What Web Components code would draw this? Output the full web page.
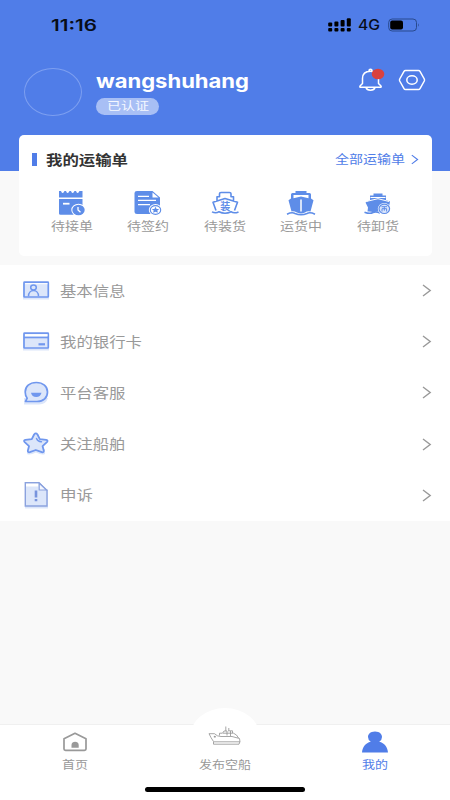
<!DOCTYPE html>
<html lang="zh-CN">
<head>
<meta charset="utf-8">
<title>我的</title>
<style>
html,body{margin:0;padding:0}
body{width:450px;height:800px;overflow:hidden;background:#f9f9f9;font-family:"Inter","Noto Sans CJK SC",sans-serif}
</style>
</head>
<body>
<mine-page></mine-page>
<script>
const define = (name, html, setup) => customElements.define(name, class extends HTMLElement {
  connectedCallback() {
    if (this.shadowRoot) return;
    const t = document.createElement('template');
    t.innerHTML = typeof html === 'function' ? html(this) : html;
    this.attachShadow({mode: 'open'}).append(t.content.cloneNode(true));
    if (setup) setup(this);
  }
});

/* Text stretched horizontally to a given width */
define('wide-text', `<style>
:host{display:block;white-space:nowrap;flex:none}
span{display:inline-block;transform-origin:0 50%}
</style><span><slot></slot></span>`, el => {
  const s = el.shadowRoot.querySelector('span');
  const w = +el.getAttribute('w');
  const natural = s.getBoundingClientRect().width;
  el.style.width = w + 'px';
  s.style.transform = `scaleX(${w / natural})`;
});

const B = '#5e8de8', L = '#dce6fa', K = '#7097ee';
const icons = {
  bell: [28, 26, `<g fill="none" stroke="#fff" stroke-width="1.500" stroke-linecap="round" stroke-linejoin="round"><path d="M12 3.500V2.800Q12 1.200 13.500 1.200T15 2.800V3.500M13.500 3.200C8 3.200 5.500 6.500 5.500 10.500V15.500L3 18Q2.300 19.300 4 19.300H23Q24.700 19.300 24 18L21.500 15.500V10.500C21.500 6.500 19 3.200 13.500 3.200M9 19.500C10 23 17 23 18 19.500"/></g><ellipse cx="21" cy="6" rx="6.300" ry="5.300" fill="#d9413f"/>`],
  gear: [28, 22, `<g fill="none" stroke="#fff" stroke-width="1.500" stroke-linejoin="round"><path d="M7.500 1.500H20.500Q21.500 1.500 22 2.400L26.300 10Q26.700 11 26.300 12L22 19.600Q21.500 20.500 20.500 20.500H7.500Q6.500 20.500 6 19.600L1.700 12Q1.300 11 1.700 10L6 2.400Q6.500 1.500 7.500 1.500Z"/><ellipse cx="14" cy="11" rx="5.200" ry="4.200"/></g>`],
  signal: [24, 14, [0,1,2,3].map(i => `<rect x="${0.200 + i * 6.200}" y="${[4.500,3.500,2,0.300][i]}" width="4" height="${[4,5,6.500,8.200][i]}" rx="1"/><rect x="${0.200 + i * 6.200}" y="10" width="4" height="3.500" rx="1"/>`).join('')],
  battery: [32, 14, `<rect x=".7" y="1" width="27.800" height="12" rx="3.500" fill="none" stroke="#294a8e" stroke-width="1"/><rect x="2.200" y="2.500" width="12.800" height="9" rx="2"/><path d="M30 5.300Q31.700 7 30 8.800Z" fill="#294a8e"/>`],
  order: [28, 26, `<path fill="${B}" d="M1 1H3Q4 4 5.500 2.500L6.500 1H8Q9 4 10.500 2.500L11.500 1H13Q14 4 15.500 2.500L16.500 1H18Q19 4 20.500 2.500L21.500 1H24.500V7.600H1ZM1 9H24.500V24.800H2.500Q1 24.800 1 23.500Z"/><path d="M5 13.700H11.500" stroke="#fff" stroke-width="1.800"/><ellipse cx="20.500" cy="20" rx="7.200" ry="6.200" fill="#fff"/><ellipse cx="20.500" cy="20" rx="6.200" ry="5.200" fill="${B}"/><path d="M20 17V20L22.500 22.300" fill="none" stroke="#fff" stroke-width="1.300"/>`],
  sign: [28, 26, `<path fill="${B}" d="M3 1H18.500L26 7.500V24H3Q.5 24 .5 22V3Q.5 1 3 1Z"/><path d="M18.500 2.500V7.500H24.500Z" fill="#fff"/><path d="M4 6.300H15M4 10.400H22M4 14.600H16" stroke="#fff" stroke-width="1.300"/><ellipse cx="21.500" cy="20" rx="6.700" ry="6" fill="#fff"/><ellipse cx="21.500" cy="20" rx="5.200" ry="4.400" fill="#fff" stroke="${B}" stroke-width="1.100"/><path fill="${B}" d="M21.500 16.800L22.600 18.900 25.300 19.100 23.300 20.600 23.900 22.800 21.500 21.700 19.100 22.800 19.700 20.600 17.700 19.100 20.400 18.900Z"/>`],
  load: [28, 26, `<g fill="none" stroke="${B}" stroke-width="1.600" stroke-linejoin="round"><path d="M6 11V6.700H8.500V3.800Q8.500 2.500 10 2.500H18.500Q20 2.500 20 3.800V6.700H22.500V11M5 20.500L2 12.300 14 8.600 26.500 12.300 23.500 20.500M1 21.900Q5 23.800 8 21.700Q14 24.700 20 21.700Q23 23.800 27.500 21.900"/></g><text x="14.200" y="19.500" text-anchor="middle" font-family="Noto Sans CJK SC" font-size="10" font-weight="700" fill="${B}">装</text>`],
  ship: [30, 26, `<path fill="${B}" d="M9.500 1H20.500V3H23.500Q25 3 25 4.500V8.500L27.500 10.200 24.500 21.500Q21 21 19 22.400Q15 24.500 11 22.400Q8 21 5.500 21.500L2.500 10.200 5 8.500V4.500Q5 3 6.500 3H9.500Z"/><path fill="#fff" d="M7.500 5H22.500V8.300L15 6.500 7.500 8.300Z"/><path d="M15 9.500V21.500" stroke="#fff" stroke-width="1.500"/><path d="M1 24.200Q6 21.800 9 23.500Q15 26 21 23.500Q24 21.800 29 24.200" fill="none" stroke="${B}" stroke-width="1.600"/>`],
  unload: [28, 26, `<path fill="${B}" d="M9.500 3.500H18.500V5.500H22V10L26 11.500 24.500 20Q23 23 19 22.400Q14 20.500 10 22.500Q6 21 3.500 21.500L4 17.500 1.500 12.500 6 10V5.500H9.500Z"/><path d="M6.500 7.500H21.500M3 11.300L14 8.700 25 11.500" fill="none" stroke="#fff" stroke-width="1"/><path d="M.5 22.200Q6 24.300 9 22.500Q12 21.500 16 23" fill="none" stroke="${B}" stroke-width="1.500"/><ellipse cx="20.300" cy="18.800" rx="6.500" ry="5.800" fill="#fff"/><ellipse cx="20.300" cy="18.800" rx="5.300" ry="4.700" fill="#dbe6fb" stroke="${B}" stroke-width="1.200"/><path d="M17.500 16.700H23M18 18.700H22.600V21.500M18 18.700V21.500M20.300 16.700V20.700" fill="none" stroke="${B}" stroke-width="1"/>`],
  idcard: [28, 22, `<rect x="1" y="4" width="26" height="15.500" fill="${L}"/><rect x="2" y="2.200" width="24.300" height="14.800" rx=".5" fill="${L}" stroke="${K}" stroke-width="1.700"/><path d="M3 3.700H25.500" stroke="#fff" stroke-width="1"/><g fill="none" stroke="${K}" stroke-width="1.500"><ellipse cx="11.500" cy="7.500" rx="2.800" ry="2.400"/><path d="M6.500 16.200C6.500 8.700 16.500 8.700 16.500 16.200"/></g>`],
  bank: [28, 22, `<rect x="1" y="4" width="26" height="15.500" fill="${L}"/><rect x="2" y="2.200" width="24.300" height="14.800" rx=".5" fill="${L}" stroke="${K}" stroke-width="1.700"/><path d="M3 4.200H25.500" stroke="#fff" stroke-width="2"/><path d="M2 6.500H26.500" stroke="${K}" stroke-width="1.600"/><path d="M16.500 13.300H23" stroke="${K}" stroke-width="2.200"/>`],
  service: [28, 26, `<path d="M2 18H26Q24 24.500 17 24.500H2Z" fill="${L}"/><path d="M14.300 2.500C7.500 2.500 3.200 6.500 3.200 12Q3.200 16 5.200 18.200L3.500 21.500H15C21.500 21.500 25.500 17.500 25.500 12C25.500 6.500 21 2.500 14.300 2.500Z" fill="${L}" stroke="${K}" stroke-width="1.700" stroke-linejoin="round"/><path d="M9 12.800H19.500Q18.500 17 14.200 17T9 12.800Z" fill="${K}"/>`],
  star: [28, 26, `<path d="M6 18H23V23Q20 24.500 14 21.500Q8 24.500 5 23Z" fill="${L}"/><path d="M12.100 3.500Q13.800 1.300 15.500 3.500L17.800 8.100 24.200 8.900Q26.500 9.400 24.900 11.200L20.600 15.200 21.800 19.700Q21.800 21.700 19.800 21.200L13.800 19 7.800 21.200Q5.800 21.700 5.800 19.700L7 15.200 2.700 11.200Q1.100 9.400 3.400 8.900L9.800 8.100Z" fill="${L}" stroke="${K}" stroke-width="1.800" stroke-linejoin="round"/><path d="M14.500 7.500Q16 11 19.500 10.800" fill="none" stroke="${K}" stroke-width="1.400" stroke-linecap="round"/>`],
  appeal: [28, 28, `<path d="M3 8H26V27.500H3Z" fill="${L}"/><path d="M3.300 1.800H17L25 9.500V25H3.300Z" fill="${L}" stroke="#8ba2de" stroke-width="1.400"/><path d="M4 2.700H16.300V5.500H4Z" fill="#fff"/><path d="M17.200 2.200V9H24.500Z" fill="#f4f7ff" stroke="#8ba2de" stroke-width="1.200"/><path d="M14 9.500V16.500M14 18V20.200" stroke="#7793dd" stroke-width="2.600"/>`],
  home: [26, 20, `<path d="M2 6.800L13 1.300 24 6.800V17Q24 18.300 22.500 18.300H3.500Q2 18.300 2 17Z" fill="none" stroke="#999" stroke-width="1.700" stroke-linejoin="round"/><path d="M9.500 15.700V13C9.500 8.800 16.700 8.800 16.700 13V15.700Z" fill="#999"/>`],
  cruise: [34, 20, `<g fill="none" stroke="#8f8f8f" stroke-width=".8"><path d="M1 7.700H6.500Q9 10.500 13 10.500H24L31.500 12.500Q32.700 16 31 18.200H5.500V15.500Q3 12 1 7.700ZM6 15.800H32M11.500 9.500V7.200H14.500L16 5H19V9.500M15 7.200H25.500Q29 8.500 30.500 12M20 4.800H24.500V7M17.800 5V.5M20.800 4.500V2M22.500 10V5"/></g><ellipse cx="6.800" cy="10.700" rx="1.100" ry=".9" fill="#999"/>`],
  user: [28, 22, `<path fill="#507de8" d="M14 .5C19 .5 21 3.500 21 6Q21 9 18.200 10.700C23.500 12 26.500 16 27 21.500H1C1.500 16 4.500 12 9.800 10.700Q7 9 7 6C7 3.500 9 .5 14 .5Z"/>`],
  chevron: [10, 13, `<path d="M1 1L8.200 6.500 1 12" fill="none" stroke="currentColor" stroke-width="1.400"/>`]
};
define('app-icon', el => {
  const [w, h, body] = icons[el.getAttribute('name')];
  return `<style>:host{display:block;flex:none;width:${w}px;height:${h}px}svg{display:block}</style><svg width="${w}" height="${h}" viewBox="0 0 ${w} ${h}">${body}</svg>`;
});

define('status-bar', `<style>
:host{display:flex;align-items:center;height:50px;padding:0 30px 0 51px;color:#080d18;line-height:20px}
.time{font-size:16px;font-weight:600;margin-right:auto}
.net{font-size:14px;font-weight:500;margin:0 8px 0 6px}
</style><wide-text class="time" w="46">11:16</wide-text><app-icon name="signal"></app-icon><wide-text class="net" w="22">4G</wide-text><app-icon name="battery"></app-icon>`);

define('user-header', `<style>
:host{display:flex;align-items:flex-start;padding:18px 24px 0;height:103px;box-sizing:border-box;color:#fff}
.avatar{width:58px;height:48px;box-sizing:border-box;border:1.500px solid #7d9ff0;border-radius:50%;flex:none}
.who{margin-left:14px;flex:1;padding-top:1px}
.name{font-size:19px;line-height:26px;font-weight:700}
.badge{display:flex;align-items:center;justify-content:center;width:63px;height:17px;margin-top:3px;border-radius:9px;background:#a8bff5;font-size:11.500px;line-height:17px;color:#f5f8ff}
.tools{display:flex;align-items:flex-start;gap:13px}
.tools app-icon:last-child{margin-top:1px}
</style><div class="avatar"></div><div class="who"><wide-text class="name" w="153"><slot></slot></wide-text><div class="badge"><wide-text w="42">已认证</wide-text></div></div><div class="tools"><app-icon name="bell"></app-icon><app-icon name="gear"></app-icon></div>`);

define('order-item', el => `<style>
:host{display:flex;flex-direction:column;align-items:center;width:76.500px;color:#999;font-size:12px;line-height:18px}
wide-text{margin-top:2px}
</style><app-icon name="${el.getAttribute('icon')}"></app-icon><wide-text w="42"><slot></slot></wide-text>`);

define('order-card', `<style>
:host{display:block;box-sizing:border-box;width:413px;height:121px;margin:-36px auto 0 18.500px;background:#fff;border-radius:5px;position:relative}
.head{display:flex;align-items:center;height:49px;padding:0 11.500px 0 13.500px;line-height:20px}
.mark{width:5px;height:13px;background:#507de8;margin-right:9px}
.title{font-size:13.800px;font-weight:600;color:#333;margin-right:auto}
.all{font-size:12.200px;color:#507de8;margin-right:5px}
app-icon{color:#507de8;transform:scale(.8)}
.items{display:flex;padding:6px 0 0 15px}
</style><div class="head"><div class="mark"></div><wide-text class="title" w="82">我的运输单</wide-text><wide-text class="all" w="70">全部运输单</wide-text><app-icon name="chevron"></app-icon></div>
<div class="items"><order-item icon="order">待接单</order-item><order-item icon="sign">待签约</order-item><order-item icon="load">待装货</order-item><order-item icon="ship">运货中</order-item><order-item icon="unload">待卸货</order-item></div>`);

define('menu-row', el => `<style>
:host{display:flex;align-items:center;height:51.200px;padding:0 18px 0 22px;color:#999;font-size:14px;line-height:20px}
wide-text{margin-left:10px;margin-right:auto}
</style><app-icon name="${el.getAttribute('icon')}"></app-icon><wide-text w="${el.getAttribute('w')}"><slot></slot></wide-text><app-icon name="chevron"></app-icon>`);

define('tab-item', el => `<style>
:host{display:flex;flex-direction:column;align-items:center;flex:1;color:${el.hasAttribute('active') ? '#507de8' : '#999'};font-size:11px;line-height:16px}
.pic{display:flex;align-items:center;justify-content:center;height:31px;box-sizing:border-box;padding-bottom:${el.hasAttribute('raised') ? 11 : 0}px}
</style><div class="pic"><app-icon name="${el.getAttribute('icon')}"></app-icon></div><wide-text w="${el.getAttribute('w')}"><slot></slot></wide-text>`);

define('tab-bar', `<style>
:host{display:block;position:relative;height:76px;background:#fff;border-top:1px solid #f0f0f0;box-sizing:border-box}
.bump{position:absolute;left:190px;top:-17px;width:70px;height:58px;border-radius:50%;background:#fff}
.tabs{display:flex;position:relative;height:62px;padding-top:1px;box-sizing:border-box}
.bar{width:160px;height:5px;border-radius:3px;background:#000;margin:0 auto}
</style><div class="bump"></div><div class="tabs"><tab-item icon="home" w="26">首页</tab-item><tab-item icon="cruise" w="52" raised>发布空船</tab-item><tab-item icon="user" w="26" active>我的</tab-item></div><div class="bar"></div>`);

define('mine-page', `<style>
:host{display:flex;flex-direction:column;width:450px;height:800px;background:#f9f9f9}
header{height:171px;background:#507de8;flex:none}
.menu{background:#fff;margin-top:9px}
tab-bar{margin-top:auto}
</style><header><status-bar></status-bar><user-header>wangshuhang</user-header></header>
<order-card></order-card>
<div class="menu"><menu-row icon="idcard" w="65.500">基本信息</menu-row><menu-row icon="bank" w="82">我的银行卡</menu-row><menu-row icon="service" w="65.500">平台客服</menu-row><menu-row icon="star" w="65.500">关注船舶</menu-row><menu-row icon="appeal" w="33">申诉</menu-row></div>
<tab-bar></tab-bar>`);
</script>
</body>
</html>
